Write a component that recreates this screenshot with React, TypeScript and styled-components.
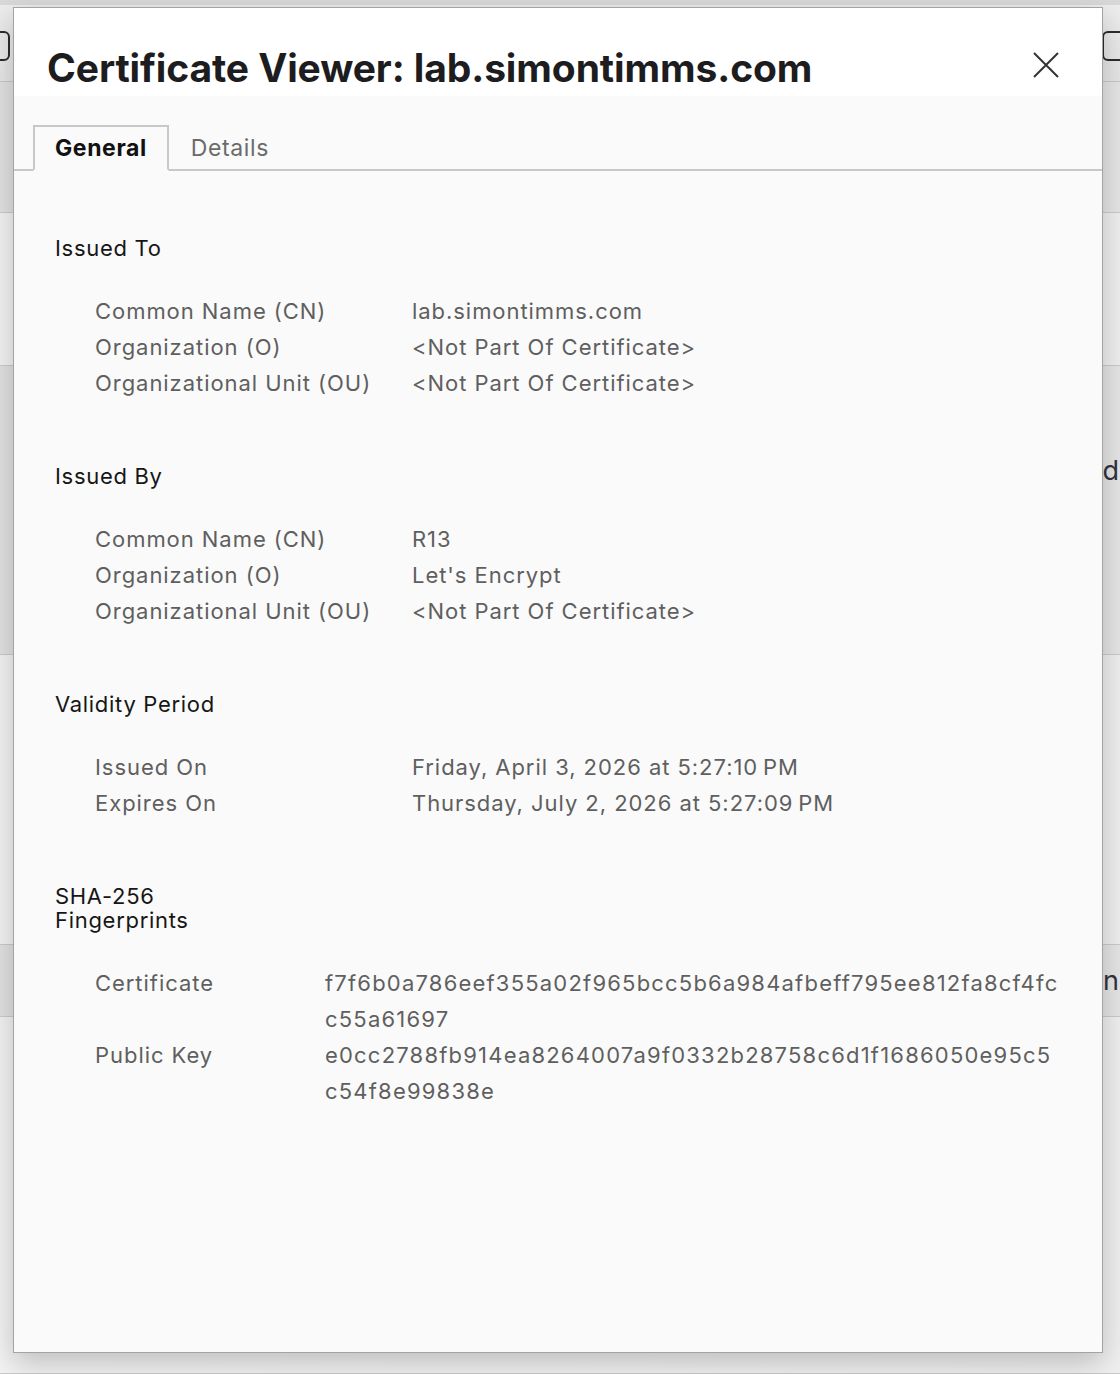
import React, { useState } from 'react';
import styled, { createGlobalStyle } from 'styled-components';

const GlobalStyle = createGlobalStyle`
  html, body {
    margin: 0;
    padding: 0;
    background: #ececec;
    font-family: Inter, "Noto Sans", "Liberation Sans", sans-serif;
  }
`;

/* page that sits behind the dialog */

const Page = styled.div`
  position: relative;
  width: 1120px;
  height: 1374px;
  overflow: hidden;
  display: flex;
  flex-direction: column;
  background: #f1f1f1;
`;

const TopStrip = styled.div`
  height: 5px;
  flex-shrink: 0;
  background: #d9d9d9;
`;

const Toolbar = styled.div`
  height: 77px;
  flex-shrink: 0;
  box-sizing: border-box;
  display: flex;
  align-items: center;
  justify-content: space-between;
  background: linear-gradient(#ededed, #e6e6e6);
  border-bottom: 1px solid #c9c9c9;
`;

const ToolButton = styled.div<{ side: 'left' | 'right' }>`
  width: 34px;
  height: 26px;
  margin-top: 6px;
  border: 2px solid #2c2c2c;
  border-radius: 6px;
  margin-left: ${({ side }) => (side === 'left' ? '-28px' : '0')};
  margin-right: ${({ side }) => (side === 'right' ? '-20px' : '0')};
`;

const Band = styled.div<{ h?: number; dark?: boolean }>`
  height: ${({ h }) => (h ? `${h}px` : 'auto')};
  flex: ${({ h }) => (h ? '0 0 auto' : '1')};
  display: flex;
  align-items: center;
  justify-content: flex-end;
  box-sizing: border-box;
  border-bottom: 1px solid #cbcbcb;
  background: ${({ dark }) =>
    dark ? 'linear-gradient(90deg, #e2e2e2, #e6e6e6)' : 'linear-gradient(90deg, #f3f3f3, #f0f0f0)'};
`;

/* only the last letter of these page labels peeks out beside the dialog */
const BandText = styled.span<{ lift?: number }>`
  font-size: 27px;
  color: #33333d;
  margin-right: 1px;
  margin-bottom: ${({ lift }) => (lift ? `${lift}px` : '0')};
`;

/* dialog */

const Dialog = styled.div`
  position: absolute;
  left: 13px;
  top: 7px;
  width: 1090px;
  height: 1346px;
  box-sizing: border-box;
  border: 1px solid #a3a3a3;
  background: #fafafa;
  box-shadow: 0 10px 28px rgba(0, 0, 0, 0.22);
  display: flex;
  flex-direction: column;
`;

const Header = styled.div`
  height: 88px;
  flex-shrink: 0;
  background: #ffffff;
  display: flex;
  align-items: center;
  justify-content: space-between;
  padding: 0 41px 0 33px;
  box-sizing: border-box;
`;

const Title = styled.h1`
  margin: 0;
  padding-top: 31px;
  font-size: 39px;
  font-weight: 700;
  color: #1d1d1f;
  letter-spacing: -0.1px;
`;

const CloseButton = styled.button`
  width: 30px;
  height: 30px;
  padding: 0;
  margin-top: 25px;
  border: none;
  background: none;
  display: flex;
  align-items: center;
  justify-content: center;
  cursor: pointer;
`;

const TabStrip = styled.div`
  display: flex;
  margin-top: 29px;
  padding-left: 19px;
  border-bottom: 2px solid #c8c8c8;
`;

const Tab = styled.div<{ active?: boolean }>`
  height: 46px;
  box-sizing: border-box;
  display: flex;
  align-items: center;
  padding: 0 20px;
  margin-bottom: -2px;
  font-size: 23px;
  letter-spacing: 0.6px;
  font-weight: ${({ active }) => (active ? 700 : 400)};
  color: ${({ active }) => (active ? '#111' : '#6b6b6b')};
  border: 2px solid ${({ active }) => (active ? '#c8c8c8' : 'transparent')};
  border-bottom: 2px solid ${({ active }) => (active ? '#fafafa' : 'transparent')};
  background: ${({ active }) => (active ? '#fafafa' : 'transparent')};
  cursor: pointer;
`;

const Content = styled.div`
  padding: 65px 40px 0 41px;
`;

const Section = styled.section`
  margin-bottom: 63px;
`;

const Heading = styled.h2`
  margin: 0 0 33px;
  max-width: 185px;
  font-size: 22px;
  line-height: 24px;
  letter-spacing: 0.7px;
  font-weight: 400;
  color: #161616;
`;

const Rows = styled.div<{ labelWidth: number }>`
  display: grid;
  grid-template-columns: ${({ labelWidth }) => labelWidth}px 1fr;
  padding-left: 40px;
  font-size: 22px;
  line-height: 36px;
  letter-spacing: 0.95px;
  color: #5f5f5f;
`;

const Label = styled.div`
  white-space: nowrap;
`;

const Value = styled.div``;

const HashLine = styled.span`
  display: block;
  letter-spacing: 1.2px;
  white-space: nowrap;
`;

type Row = [string, string | string[]];

const issuedTo: Row[] = [
  ['Common Name (CN)', 'lab.simontimms.com'],
  ['Organization (O)', '<Not Part Of Certificate>'],
  ['Organizational Unit (OU)', '<Not Part Of Certificate>'],
];

const issuedBy: Row[] = [
  ['Common Name (CN)', 'R13'],
  ['Organization (O)', "Let's Encrypt"],
  ['Organizational Unit (OU)', '<Not Part Of Certificate>'],
];

const validity: Row[] = [
  ['Issued On', 'Friday, April 3, 2026 at 5:27:10\u2009PM'],
  ['Expires On', 'Thursday, July 2, 2026 at 5:27:09\u2009PM'],
];

// hashes are shown wrapped the way the viewer wraps them
const fingerprints: Row[] = [
  ['Certificate', ['f7f6b0a786eef355a02f965bcc5b6a984afbeff795ee812fa8cf4fc', 'c55a61697']],
  ['Public Key', ['e0cc2788fb914ea8264007a9f0332b28758c6d1f1686050e95c5', 'c54f8e99838e']],
];

const InfoSection: React.FC<{ title: string; rows: Row[]; labelWidth?: number }> = ({
  title,
  rows,
  labelWidth = 317,
}) => (
  <Section>
    <Heading>{title}</Heading>
    <Rows labelWidth={labelWidth}>
      {rows.map(([label, value]) => (
        <React.Fragment key={label}>
          <Label>{label}</Label>
          <Value>
            {Array.isArray(value) ? value.map((line) => <HashLine key={line}>{line}</HashLine>) : value}
          </Value>
        </React.Fragment>
      ))}
    </Rows>
  </Section>
);

const App: React.FC = () => {
  const [tab, setTab] = useState<'general' | 'details'>('general');

  return (
    <>
      <GlobalStyle />
      <Page>
        <TopStrip />
        <Toolbar>
          <ToolButton side="left" />
          <ToolButton side="right" />
        </Toolbar>
        <Band h={131} dark />
        <Band h={153} />
        <Band h={289} dark>
          <BandText lift={80}>d</BandText>
        </Band>
        <Band h={290} />
        <Band h={72} dark>
          <BandText>n</BandText>
        </Band>
        <Band />

        <Dialog role="dialog">
          <Header>
            <Title>Certificate Viewer: lab.simontimms.com</Title>
            <CloseButton aria-label="Close">
              <svg width="26" height="26" viewBox="0 0 26 26">
                <path d="M1 1 L25 25 M25 1 L1 25" stroke="#333" strokeWidth="2" fill="none" />
              </svg>
            </CloseButton>
          </Header>
          <TabStrip>
            <Tab active={tab === 'general'} onClick={() => setTab('general')}>
              General
            </Tab>
            <Tab active={tab === 'details'} onClick={() => setTab('details')}>
              Details
            </Tab>
          </TabStrip>
          <Content>
            <InfoSection title="Issued To" rows={issuedTo} />
            <InfoSection title="Issued By" rows={issuedBy} />
            <InfoSection title="Validity Period" rows={validity} />
            <InfoSection title="SHA-256 Fingerprints" rows={fingerprints} labelWidth={230} />
          </Content>
        </Dialog>
      </Page>
    </>
  );
};

export default App;
